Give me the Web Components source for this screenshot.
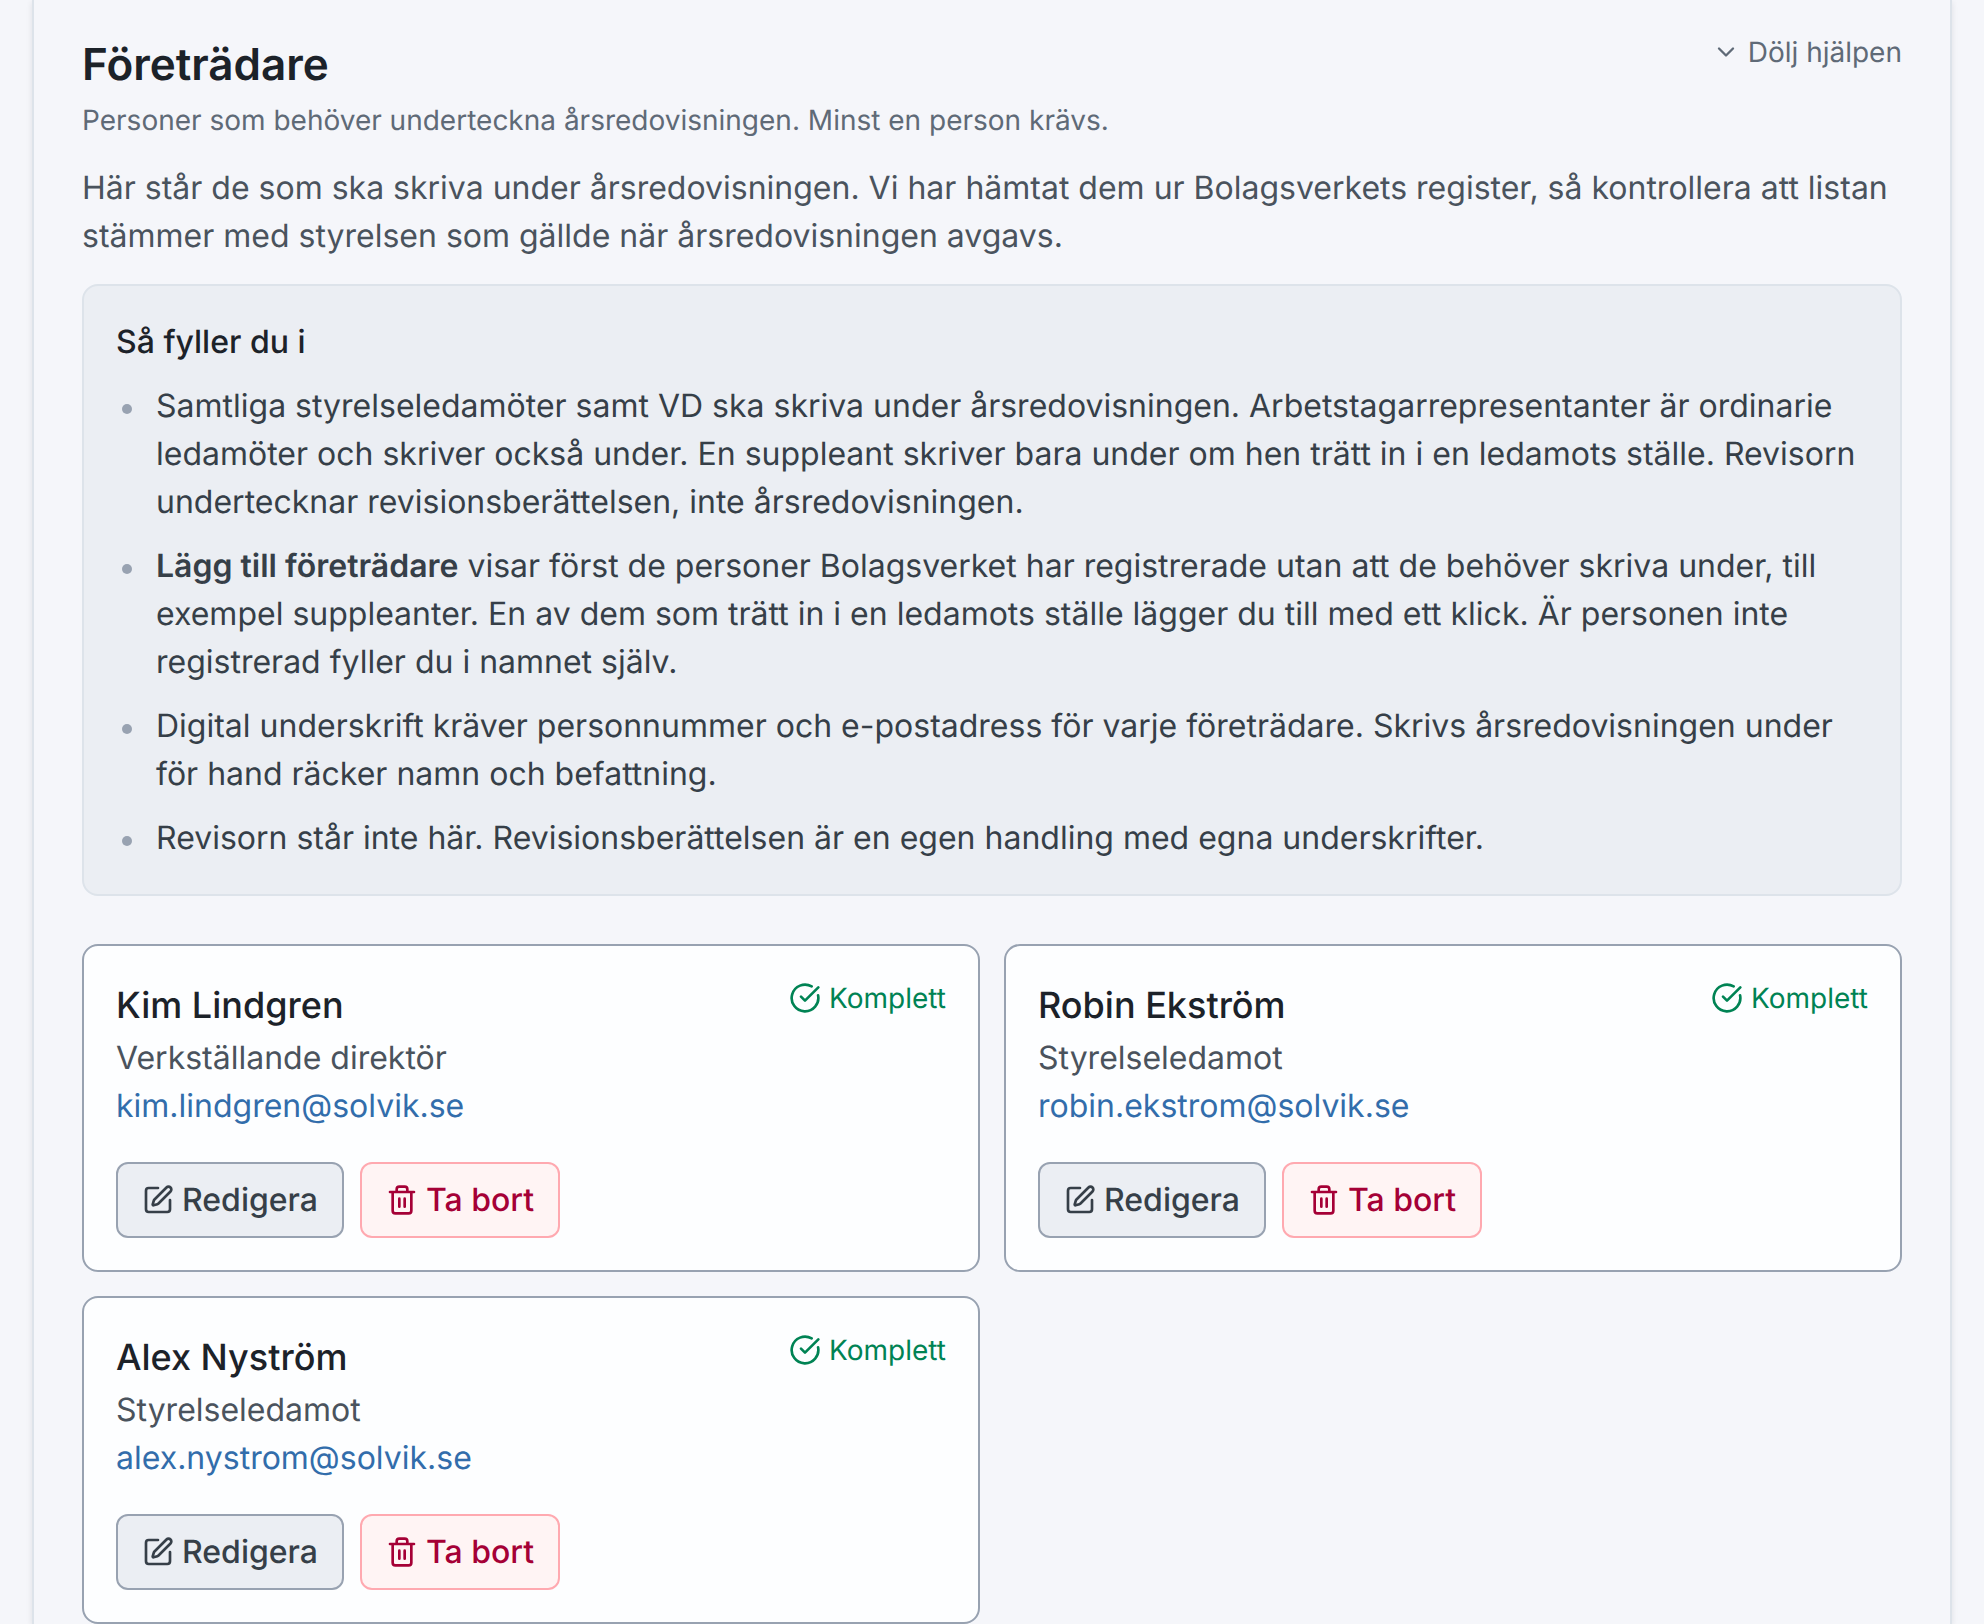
<!DOCTYPE html>
<html lang="sv">
<head>
<meta charset="utf-8">
<meta name="viewport" content="width=device-width, initial-scale=1">
<title>Företrädare</title>
<style>
  :root {
    --bg: #f5f6fa;
    --surface: #fdfeff;
    --muted: #ebeef3;
    --line: #dde3ea;
    --line-strong: #98a2b1;
    --ink: #1c2229;
    --ink-2: #363f48;
    --ink-3: #4a535d;
    --ink-4: #5f6a77;
    --link: #326dab;
    --ok: #008354;
    --danger: #a50036;
    --danger-bg: #fff4f4;
    --danger-line: #ffa9b0;
  }
  body {
    margin: 0;
    min-height: 100vh;
    background: var(--bg);
    color: var(--ink-2);
    font-family: Inter, "Liberation Sans", sans-serif;
    font-size: 32px;
    line-height: 48px;
    text-rendering: geometricPrecision;
  }
</style>
</head>
<body>
<representatives-section>
  <h2 slot="title">Företrädare</h2>
  <span slot="subtitle">Personer som behöver underteckna årsredovisningen. Minst en person krävs.</span>
  <span slot="intro">Här står de som ska skriva under årsredovisningen. Vi har hämtat dem ur Bolagsverkets register, så kontrollera att listan stämmer med styrelsen som gällde när årsredovisningen avgavs.</span>
  <help-box slot="help" heading="Så fyller du i">
    <help-item>Samtliga styrelseledamöter samt VD ska skriva under årsredovisningen. Arbetstagarrepresentanter är ordinarie ledamöter och skriver också under. En suppleant skriver bara under om hen trätt in i en ledamots ställe. Revisorn undertecknar revisionsberättelsen, inte årsredovisningen.</help-item>
    <help-item><strong>Lägg till företrädare</strong> visar först de personer Bolagsverket har registrerade utan att de behöver skriva under, till exempel suppleanter. En av dem som trätt in i en ledamots ställe lägger du till med ett klick. Är personen inte registrerad fyller du i namnet själv.</help-item>
    <help-item>Digital underskrift kräver personnummer och e-postadress för varje företrädare. Skrivs årsredovisningen under för hand räcker namn och befattning.</help-item>
    <help-item>Revisorn står inte här. Revisionsberättelsen är en egen handling med egna underskrifter.</help-item>
  </help-box>
  <person-card name="Kim Lindgren" role-title="Verkställande direktör" email="kim.lindgren@solvik.se"></person-card>
  <person-card name="Robin Ekström" role-title="Styrelseledamot" email="robin.ekstrom@solvik.se"></person-card>
  <person-card name="Alex Nyström" role-title="Styrelseledamot" email="alex.nystrom@solvik.se"></person-card>
</representatives-section>

<script>
  const ICONS = {
    chevron: '<path d="m6 9 6 6 6-6"/>',
    edit: '<path d="M12 3H5a2 2 0 0 0-2 2v14a2 2 0 0 0 2 2h14a2 2 0 0 0 2-2v-7"/><path d="M18.375 2.625a1 1 0 0 1 3 3l-9.013 9.014a2 2 0 0 1-.853.505l-2.873.84a.5.5 0 0 1-.62-.62l.84-2.873a2 2 0 0 1 .506-.852z"/>',
    trash: '<path d="M3 6h18M19 6v14a2 2 0 0 1-2 2H7a2 2 0 0 1-2-2V6M8 6V4a2 2 0 0 1 2-2h4a2 2 0 0 1 2 2v2M10 11v6M14 11v6"/>',
    check: '<path d="M21.801 10A10 10 0 1 1 17 3.335"/><path d="m9 11 3 3L22 4"/>'
  };

  class BaseElement extends HTMLElement {
    connectedCallback() {
      if (this.shadowRoot) return;
      this.attachShadow({ mode: 'open' }).innerHTML = this.render();
    }
  }

  customElements.define('line-icon', class extends BaseElement {
    render() {
      return `<style>
        :host { display: block; flex: none; width: var(--icon-size, 32px); height: var(--icon-size, 32px); }
        svg { display: block; width: 100%; height: 100%; fill: none; stroke: currentColor;
              stroke-width: 2; stroke-linecap: round; stroke-linejoin: round; }
      </style><svg viewBox="0 0 24 24" aria-hidden="true">${ICONS[this.getAttribute('name')]}</svg>`;
    }
  });

  customElements.define('action-button', class extends BaseElement {
    render() {
      return `<style>
        :host { display: block; }
        button { display: flex; align-items: center; gap: 8px; margin: 0; padding: 12px 24px;
                 font: inherit; font-weight: 500; color: var(--ink-2); background: var(--muted);
                 border: 2px solid var(--line-strong); border-radius: 12px; cursor: pointer; text-rendering: inherit; }
        :host([variant="danger"]) button { color: var(--danger); background: var(--danger-bg); border-color: var(--danger-line); }
      </style><button type="button"><line-icon name="${this.getAttribute('icon')}"></line-icon><slot></slot></button>`;
    }
  });

  customElements.define('status-badge', class extends BaseElement {
    render() {
      return `<style>
        :host { display: flex; align-items: center; gap: 8px; flex: none; color: var(--ok);
                font-size: 28px; line-height: 40px; }
      </style><line-icon name="check"></line-icon><slot></slot>`;
    }
  });

  customElements.define('help-item', class extends BaseElement {
    connectedCallback() {
      super.connectedCallback();
      this.setAttribute('role', 'listitem');
    }
    render() {
      return `<style>
        :host { display: flex; gap: 24px; padding-left: 6px; }
        i { flex: none; width: 10px; height: 10px; margin-top: 22px; border-radius: 50%; background: var(--line-strong); }
        ::slotted(strong) { font-weight: 600; }
      </style><i></i><div><slot></slot></div>`;
    }
  });

  customElements.define('help-box', class extends BaseElement {
    render() {
      return `<style>
        :host { display: flex; flex-direction: column; gap: 16px; padding: 32px; background: var(--muted);
                border: 2px solid var(--line); border-radius: 16px; }
        h3 { margin: 0; font: inherit; font-weight: 500; color: var(--ink); }
        div { display: flex; flex-direction: column; gap: 16px; }
      </style><h3>${this.getAttribute('heading')}</h3><div role="list"><slot></slot></div>`;
    }
  });

  customElements.define('person-card', class extends BaseElement {
    render() {
      const email = this.getAttribute('email');
      return `<style>
        :host { display: flex; flex-direction: column; gap: 32px; padding: 32px; background: var(--surface);
                border: 2px solid var(--line-strong); border-radius: 16px; }
        .top { display: flex; justify-content: space-between; align-items: flex-start; gap: 16px; }
        h3 { margin: 0 0 2px; font-size: 36px; line-height: 54px; font-weight: 500; color: var(--ink); }
        p { margin: 0; color: var(--ink-3); }
        a { display: block; color: var(--link); text-decoration: none; }
        .actions { display: flex; gap: 16px; }
      </style>
      <div class="top">
        <div>
          <h3>${this.getAttribute('name')}</h3>
          <p>${this.getAttribute('role-title')}</p>
          <a href="mailto:${email}">${email}</a>
        </div>
        <status-badge>Komplett</status-badge>
      </div>
      <div class="actions">
        <action-button icon="edit">Redigera</action-button>
        <action-button icon="trash" variant="danger">Ta bort</action-button>
      </div>`;
    }
  });

  customElements.define('representatives-section', class extends BaseElement {
    render() {
      return `<style>
        :host { display: block; margin: 0 32px; padding: 32px 48px 0; border: solid var(--line);
                border-width: 0 2px; box-shadow: 0 2px 6px rgb(28 34 41 / .1); }
        header { display: flex; justify-content: space-between; align-items: flex-start; gap: 32px; }
        ::slotted(h2) { margin: 0; font-size: 44px; line-height: 64px; font-weight: 600; color: var(--ink); }
        .subtitle { margin: 4px 0 24px; font-size: 28px; line-height: 40px; color: var(--ink-4); }
        .intro { margin: 0 0 24px; color: var(--ink-3); }
        button { display: flex; align-items: center; gap: 8px; margin: 0; padding: 0; border: 0; background: none;
                 font: inherit; font-size: 28px; line-height: 40px; color: var(--ink-4); cursor: pointer;
                 text-rendering: inherit; --icon-size: 28px; }
        .cards { display: grid; grid-template-columns: 1fr 1fr; gap: 24px; margin-top: 48px; }
      </style>
      <header>
        <slot name="title"></slot>
        <button type="button" aria-expanded="true"><line-icon name="chevron"></line-icon>Dölj hjälpen</button>
      </header>
      <p class="subtitle"><slot name="subtitle"></slot></p>
      <p class="intro"><slot name="intro"></slot></p>
      <slot name="help"></slot>
      <div class="cards"><slot></slot></div>`;
    }
  });
</script>
</body>
</html>
